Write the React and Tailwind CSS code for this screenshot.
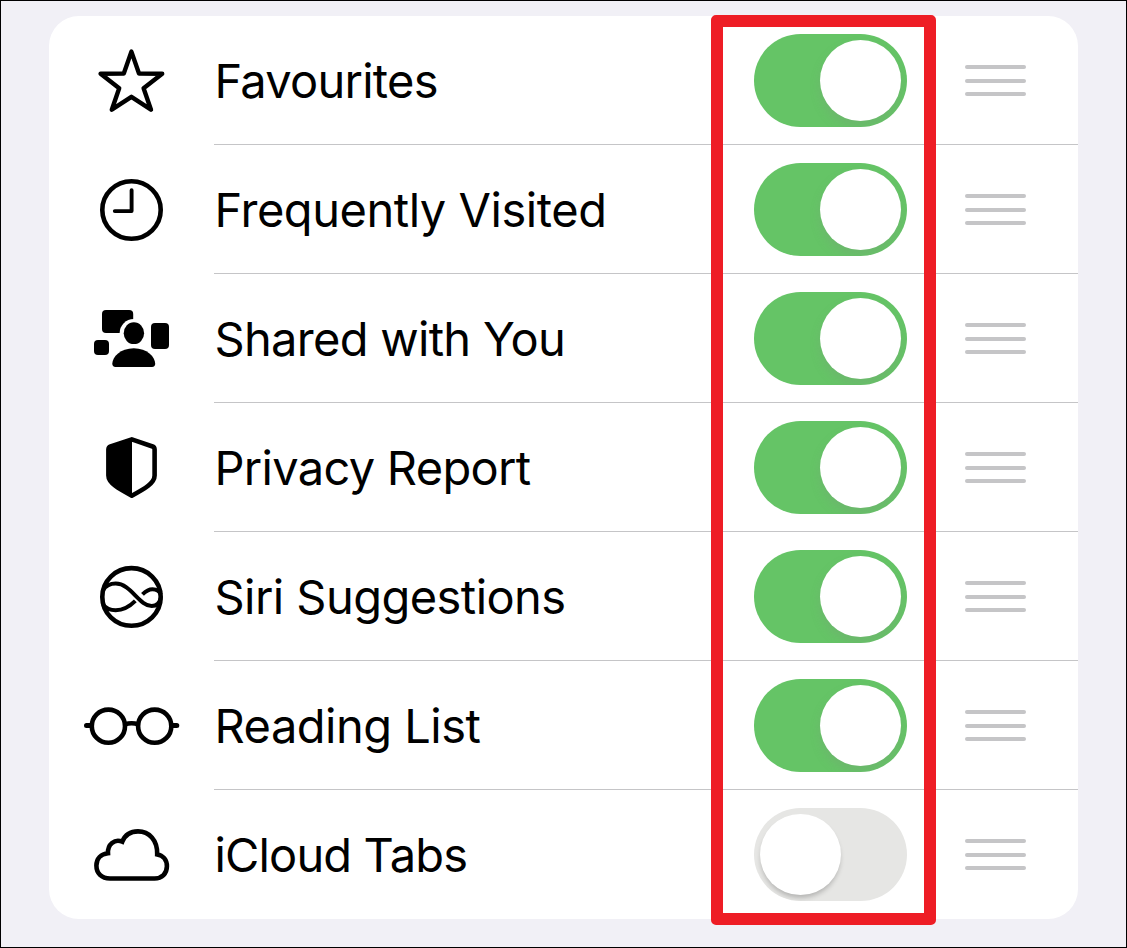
import React, { useState } from 'react';
import clsx from 'clsx';

function IconFrame({ children }) {
    return (
        <svg
            className="h-[101px] w-[100px] shrink-0"
            viewBox="0 0 100 101"
            fill="none"
            stroke="black"
            strokeWidth="4.6"
            strokeLinecap="round"
            strokeLinejoin="round"
        >
            {children}
        </svg>
    );
}

const StarIcon = () => (
    <IconFrame>
        <path strokeWidth="4.4" d="M50.4 21.6 L58 43.5 L81.2 43.7 L62.6 58.2 L70 79.7 L50.4 66.8 L30.8 79.7 L38.2 58.2 L19.6 43.7 L42.8 43.5 Z" />
    </IconFrame>
);

const ClockIcon = () => (
    <IconFrame>
        <ellipse cx="50.5" cy="51" rx="29.2" ry="28.7" />
        <path strokeWidth="3.9" d="M50.6 31.2 V52.1 H33.8" />
    </IconFrame>
);

const SharedIcon = () => (
    <IconFrame>
        <g fill="black" stroke="none">
            <rect x="21" y="22" width="31.2" height="23" rx="4" />
            <circle cx="52.8" cy="45.2" r="14.2" fill="white" />
            <ellipse cx="52.9" cy="45.2" rx="10.2" ry="10.9" />
            <rect x="70" y="35" width="18" height="26" rx="4" />
            <rect x="13" y="52" width="15" height="15" rx="4" />
            <path d="M34.5 79 C32.3 79 31.3 77.7 31.3 75.8 C31.3 69 39.5 60.3 52.8 60.3 C66 60.3 74.2 69 74.2 75.8 C74.2 77.7 73.2 79 71 79 Z" />
        </g>
    </IconFrame>
);

const ShieldIcon = () => (
    <IconFrame>
        <path d="M50.8 22.4 L71.6 29.5 Q73.6 30.3 73.6 32.6 V58.5 C73.6 66 64 71.6 50.8 78.7 C37.6 71.6 27.4 66 27.4 58.5 V32.6 Q27.4 30.3 29.6 29.5 Z" />
        <path fill="black" stroke="none" d="M51 21 L27 30 V60 C29 68 40 73 51 79 Z" />
    </IconFrame>
);

const SiriIcon = () => (
    <IconFrame>
        <ellipse cx="50.5" cy="50.9" rx="29.2" ry="28.8" />
        <g strokeWidth="4" strokeLinecap="butt">
            <path d="M21.8 44.5 C25 39.5 29.5 37.6 34.7 37.6 C50 37.6 58 60 70.7 60 C75.5 60 78.8 57 79.8 52" />
            <path d="M21.8 58.5 C25 62.5 29.5 64.2 34.7 64.2 C43 64.2 49 60.2 54.3 54.9" />
            <path d="M61.5 48.4 C64.5 45.4 67.4 43.3 71.5 43.3 C75.3 43.3 78.4 45 79.8 48.6" />
        </g>
    </IconFrame>
);

const GlassesIcon = () => (
    <IconFrame>
        <circle cx="27.4" cy="51.2" r="16.6" />
        <circle cx="73.7" cy="51.2" r="16.6" />
        <path strokeLinecap="butt" d="M44 49.4 Q50.6 47 57.2 49.4" />
        <path strokeWidth="5" d="M5.5 50.4 H9 M92.2 50.4 H95.8" />
    </IconFrame>
);

const CloudIcon = () => (
    <IconFrame>
        <path
            strokeLinejoin="miter"
            d="M29 74.5 C20.5 74.5 15.4 69.3 15.4 61.6 C15.4 54.6 20 49.8 27 49.2 C26.5 40.5 33.5 34.4 41.3 37.7 C44 31 50 27.4 57 27.4 C68 27.4 76.6 36 76.2 50.4 C82 51.3 85.9 56 85.9 62.3 C85.9 69.5 81 74.5 73.5 74.5 Z"
        />
    </IconFrame>
);

const SECTIONS = [
    { id: 'favourites', label: 'Favourites', icon: StarIcon, tracking: 'tracking-[-0.75px]', enabled: true },
    { id: 'frequent', label: 'Frequently Visited', icon: ClockIcon, tracking: 'tracking-[-0.45px]', enabled: true },
    { id: 'shared', label: 'Shared with You', icon: SharedIcon, tracking: 'tracking-[-0.7px]', enabled: true },
    { id: 'privacy', label: 'Privacy Report', icon: ShieldIcon, tracking: 'tracking-[-0.7px]', enabled: true },
    { id: 'siri', label: 'Siri Suggestions', icon: SiriIcon, tracking: 'tracking-[-0.55px]', enabled: true },
    { id: 'reading', label: 'Reading List', icon: GlassesIcon, tracking: 'tracking-[-0.5px]', enabled: true },
    { id: 'icloud', label: 'iCloud Tabs', icon: CloudIcon, tracking: 'tracking-[-0.85px]', enabled: false },
];

function Toggle({ label, checked, onChange }) {
    return (
        <button
            role="switch"
            aria-checked={checked}
            aria-label={label}
            onClick={onChange}
            className={clsx(
                'flex h-[93px] w-[153px] shrink-0 items-center overflow-hidden rounded-full p-1.5',
                checked ? 'justify-end bg-[#65c466]' : 'justify-start bg-[#e6e6e4]'
            )}
        >
            <span
                className={clsx(
                    'size-[81px] rounded-full bg-white',
                    checked
                        ? 'shadow-[0_6px_10px_rgba(120,160,120,0.35)]'
                        : 'shadow-[0_4px_5px_-1px_rgba(0,0,0,0.22)]'
                )}
            />
        </button>
    );
}

function DragHandle() {
    return (
        <div className="ml-[58px] flex h-[31px] w-[61px] flex-col justify-between">
            <span className="h-1 rounded-full bg-[#c5c5c7]" />
            <span className="h-1 rounded-full bg-[#c5c5c7]" />
            <span className="h-1 rounded-full bg-[#c5c5c7]" />
        </div>
    );
}

function SectionRow({ section, isLast, onToggle }) {
    const Icon = section.icon;

    return (
        <li className="flex h-[129px]">
            <div className="flex w-[165px] items-center pl-8">
                <Icon />
            </div>
            <div className="relative flex flex-1 items-center">
                <span className={clsx('flex-1 pl-[0.5px] whitespace-nowrap text-[47px] leading-none', section.tracking)}>
                    {section.label}
                </span>
                <Toggle label={section.label} checked={section.enabled} onChange={onToggle} />
                <DragHandle />
                <div className="w-[52px]" />
                {!isLast && <div className="absolute inset-x-0 bottom-0 h-px bg-[#c5c5c7]" />}
            </div>
        </li>
    );
}

export default function App() {
    const [sections, setSections] = useState(SECTIONS);

    const handleToggle = (id) => {
        setSections(sections.map(s => (s.id === id ? { ...s, enabled: !s.enabled } : s)));
    };

    return (
        <div className="relative h-[948px] w-[1127px] overflow-hidden border border-black bg-[#f1f0f6] pt-[15px] pl-12 font-['Inter',sans-serif] text-black">
            <ul className="w-[1029px] rounded-[30px] bg-white">
                {sections.map((section, i) => (
                    <SectionRow
                        key={section.id}
                        section={section}
                        isLast={i === sections.length - 1}
                        onToggle={() => handleToggle(section.id)}
                    />
                ))}
            </ul>

            {/* highlight around the toggle column */}
            <div className="pointer-events-none absolute top-3.5 left-[710px] h-[910px] w-[225px] rounded-[5px] border-12 border-[#ee1d25]" />
        </div>
    );
}
